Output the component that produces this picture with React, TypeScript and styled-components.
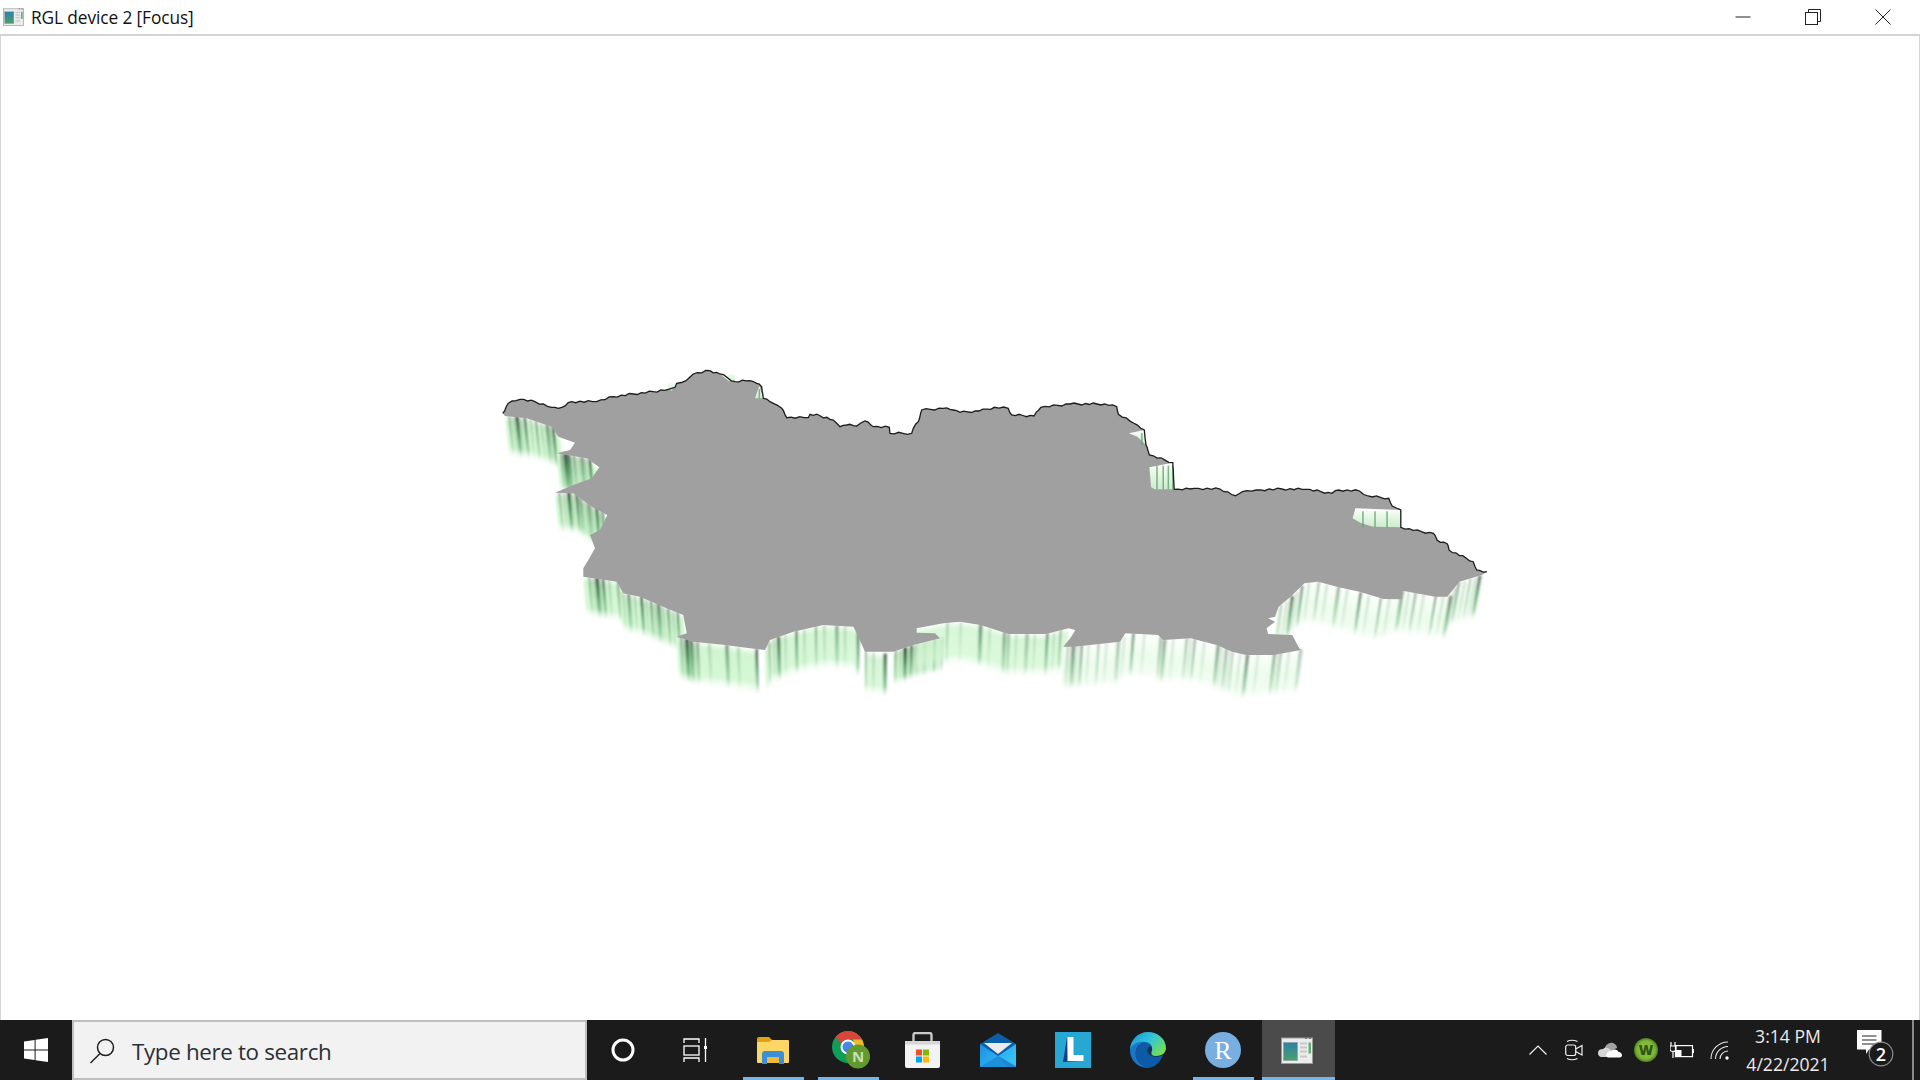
import React from "react";
import styled, { createGlobalStyle } from "styled-components";

const Global = createGlobalStyle`
  html, body { margin: 0; padding: 0; background: #fff; }
  #root { width: 1920px; height: 1080px; overflow: hidden; }
`;

const UI_FONT = `"Open Sans", "Noto Sans", "Liberation Sans", sans-serif`;

const Screen = styled.div`
  width: 1920px;
  height: 1080px;
  display: flex;
  flex-direction: column;
  overflow: hidden;
  font-family: ${UI_FONT};
`;
const TitleBar = styled.header`
  height: 34px;
  flex: none;
  display: flex;
  align-items: center;
  padding-left: 3px;
  background: #fff;
  border-bottom: 2px solid #d4d4d4;
`;
const TitleText = styled.span`
  margin-left: 7px;
  font-size: 17.3px;
  color: #111;
  white-space: nowrap;
  letter-spacing: -0.1px;
  flex: 1;
`;
const WinButton = styled.div`
  width: 70px;
  height: 34px;
  display: flex;
  align-items: center;
  justify-content: center;
`;
const WinButtons = styled.div`
  display: flex;
  margin-right: 2px;
`;
const Canvas = styled.main`
  flex: 1;
  min-height: 0;
  border-left: 1px solid #d4d4d4;
  border-right: 1px solid #d4d4d4;
  overflow: hidden;
  background: #fff;
`;
const MapSvg = styled.svg`
  display: block;
  width: 1920px;
  height: 984px;
  margin-left: -1px;
`;
const Taskbar = styled.footer`
  height: 60px;
  flex: none;
  display: flex;
  align-items: stretch;
  background: #1b1b1b;
`;
const StartButton = styled.div`
  width: 72px;
  display: flex;
  align-items: center;
  justify-content: center;
`;
const SearchBox = styled.div`
  width: 515px;
  box-sizing: border-box;
  display: flex;
  align-items: center;
  padding: 2px 0 0 15px;
  gap: 17px;
  background: #f2f2f2;
  border: 2px solid #bfbfbf;
`;
const SearchText = styled.span`
  font-size: 22.4px;
  color: #2b2f36;
  white-space: nowrap;
  letter-spacing: -0.35px;
`;
const TaskItem = styled.div<{ $open?: boolean; $active?: boolean }>`
  position: relative;
  box-sizing: border-box;
  padding-right: 4px;
  width: ${(p) => (p.$active ? "73px" : "75px")};
  display: flex;
  align-items: center;
  justify-content: center;
  background: ${(p) => (p.$active ? "#4b4b4b" : "transparent")};
  &::after {
    content: "";
    display: ${(p) => (p.$open || p.$active ? "block" : "none")};
    position: absolute;
    bottom: 0;
    height: 3px;
    left: ${(p) => (p.$active ? "0" : "6px")};
    right: ${(p) => (p.$active ? "0" : "8px")};
    background: #76b5e8;
  }
`;
const TaskViewSlot = styled(TaskItem)`
  padding-right: 8px;
`;
const Spacer = styled.div`
  flex: 1;
`;
const TrayIcon = styled.div`
  width: 36px;
  display: flex;
  align-items: center;
  justify-content: center;
`;
const WifiSlot = styled(TrayIcon)`
  padding-left: 3px;
  box-sizing: border-box;
`;
const Clock = styled.div`
  width: 104px;
  display: flex;
  flex-direction: column;
  align-items: center;
  justify-content: center;
  gap: 6px;
  color: #ececec;
  font-size: 17.6px;
  line-height: 22px;
`;
const NotifyButton = styled.div`
  width: 72px;
  display: flex;
  align-items: center;
  justify-content: center;
`;
const ShowDesktop = styled.div`
  width: 2px;
  margin-right: 6px;
  background: #8a8a8a;
`;

/* ---------- map data, in the crop coordinates it was measured from ---------- */
type Pt = [number, number];
const a = (x: number, y: number): Pt => [480 + x / 3, 350 + y / 3];
const b = (x: number, y: number): Pt => [960 + x * 0.3444, 380 + y / 3];
const ax = (x: number) => 480 + x / 3;
const bx = (x: number) => 960 + x * 0.3444;
const pa = (r: number[]) => {
  const o: Pt[] = [];
  for (let i = 0; i < r.length; i += 2) o.push(a(r[i], r[i + 1]));
  return o;
};
const pb = (r: number[]) => {
  const o: Pt[] = [];
  for (let i = 0; i < r.length; i += 2) o.push(b(r[i], r[i + 1]));
  return o;
};

const topEdge: Pt[] = [
  ...pa([68,190,85,160,120,148,165,155,215,172,245,172,275,155,350,155,400,140,460,132,520,125,565,118,585,112,590,100,618,92,640,72,690,62,720,72,765,95,810,92,830,100,845,110,850,145,880,160,905,175,920,203,985,203,990,193,1020,197,1060,210,1080,230,1100,225,1130,228,1155,213,1180,230,1228,232,1230,250,1295,250,1300,235,1315,215,1325,180,1390,175,1420,180]),
  ...pb([0,97,55,93,100,82,140,85,150,105,215,108,235,82,320,72,420,72,455,80,460,103,505,130,535,150,540,195,550,225,618,248,622,328,680,325,755,327,800,347,820,335,860,330,935,327,1005,328,1080,340,1100,330,1160,333,1185,348,1245,355,1255,378,1280,390,1280,442,1340,455,1375,460,1385,480,1415,492,1420,510,1490,545,1500,570,1530,575]),
];
const bottomEdge: Pt[] = [
  ...pb([1515,585,1450,605,1415,650,1380,650,1285,632,1283,658,1230,657,1160,635,1100,622,1040,605,1000,610,960,650,925,680,915,710,895,715,915,725,890,745,895,762,965,765,985,805,990,810,910,825,830,825,790,815,745,795,670,775,590,780,575,765,480,760,465,785,330,800,300,800,320,775,335,750,315,745,250,762,140,762,60,735,0,725]),
  ...pa([1390,820,1310,835,1310,848,1365,850,1380,865,1300,885,1240,905,1155,905,1130,850,1120,830,1030,825,940,845,870,870,855,900,735,885,640,875,590,860,620,850,610,795,560,775,480,740,430,730,410,695,310,680,310,655,325,630,345,595,330,555,360,540,382,495,335,470,280,430,225,428,280,405,335,385,358,352,320,325,230,310,270,300,285,278,235,260,215,230,140,205,75,198]),
];

type Wall = { edge: Pt[]; h: number; stripes: number[]; tint: number; dark: number };
const walls: Wall[] = [
  { edge: pa([75,198,140,205,215,230,240,265]), h: 43, stripes: [85,105,130,165,195,215].map(ax), tint: 1, dark: 0.85 },
  { edge: pa([230,310,320,325,350,350]), h: 42, stripes: [240,250,262,280,300,325].map(ax), tint: 1, dark: 0.85 },
  { edge: pa([225,428,280,430,335,470,375,490]), h: 42, stripes: [235,260,285,300,320,345,365].map(ax), tint: 1, dark: 0.85 },
  { edge: pa([310,680,410,695,430,730,480,740,560,775,610,795]), h: 42, stripes: [325,345,365,410,440,480,510,530,560,590].map(ax), tint: 1, dark: 0.85 },
  { edge: pa([590,860,640,875,735,885,825,900]), h: 46, stripes: [600,615,630,650,735,825].map(ax), tint: 1, dark: 0.85 },
  { edge: pa([855,900,870,870,940,845,1030,825,1120,830,1135,855]), h: 46, stripes: [865,890,945,1005,1065,1130].map(ax), tint: 0.85, dark: 0.7 },
  { edge: pa([1155,905,1220,915]), h: 44, stripes: [1155,1210].map(ax), tint: 0.7, dark: 0.7 },
  { edge: pa([1240,905,1300,885,1385,865]), h: 36, stripes: [1245,1270,1290,1310,1330,1360,1385].map(ax), tint: 0.85, dark: 0.9 },
  { edge: [...pa([1310,835,1390,820]), ...pb([0,725,60,735,140,762,250,762,315,745])], h: 45, stripes: [ax(1400), b(55,0)[0], b(125,0)[0], b(140,0)[0], b(190,0)[0], b(250,0)[0], b(290,0)[0]], tint: 0.6, dark: 0.55 },
  { edge: pb([300,800,465,785,480,760,575,765,590,780,670,775,745,795,790,815,830,825,990,810]), h: 46, stripes: [310,325,350,400,455,500,580,590,655,680,745,770,790,830,910,930,985].map(bx), tint: 0.3, dark: 0.55 },
  { edge: pb([915,725,925,680,960,650,1000,610,1040,605,1100,622,1230,657,1283,632,1420,650,1440,610,1520,585]), h: 45, stripes: [930,960,990,1040,1095,1160,1220,1280,1320,1380,1420,1445,1480,1505].map(bx), tint: 0.28, dark: 0.65 },
];

type Sliver = { pts: Pt[]; lines: number[] };
const slivers: Sliver[] = [
  { pts: pa([563,95,587,100,575,122,566,118]), lines: [] },
  { pts: pa([720,72,765,70,765,95,745,92]), lines: [] },
  { pts: pa([825,145,838,108,850,145]), lines: [ax(838)] },
  { pts: pb([490,160,535,150,540,195,515,170]), lines: [bx(528)] },
  { pts: pb([550,262,618,248,622,328,565,328,555,322]), lines: [bx(572), bx(590), bx(605), bx(618)] },
  { pts: pb([1148,385,1280,390,1280,442,1200,440,1165,430,1140,415]), lines: [bx(1170), bx(1205), bx(1240)] },
];

const yAt = (edge: Pt[], x: number) => {
  for (let i = 0; i < edge.length - 1; i++) {
    const [x1, y1] = edge[i];
    const [x2, y2] = edge[i + 1];
    if (x >= Math.min(x1, x2) && x <= Math.max(x1, x2)) {
      return x1 === x2 ? y1 : y1 + ((x - x1) / (x2 - x1)) * (y2 - y1);
    }
  }
  return edge[edge.length - 1][1];
};
const lean = (x: number) => (860 - x) * 0.013;
const pts = (l: Pt[]) => l.map((p) => `${p[0].toFixed(1)},${p[1].toFixed(1)}`).join(" ");

const jagged = (edge: Pt[]) => {
  const o: Pt[] = [];
  let n = 0;
  for (let i = 0; i < edge.length - 1; i++) {
    const [x1, y1] = edge[i];
    const [x2, y2] = edge[i + 1];
    const len = Math.hypot(x2 - x1, y2 - y1);
    const steps = Math.max(1, Math.round(len / 4));
    for (let s = 0; s < steps; s++) {
      n++;
      const t = s / steps;
      const j = s === 0 ? 0 : ((n * 37) % 5 - 2) * 0.5;
      o.push([x1 + (x2 - x1) * t, y1 + (y2 - y1) * t + j]);
    }
  }
  o.push(edge[edge.length - 1]);
  return o;
};

const StripeShape = ({ x, y, w, h, o }: { x: number; y: number; w: number; h: number; o: number }) => (
  <polygon
    fill="url(#stripe)"
    opacity={Math.min(o, 1)}
    points={pts([
      [x, y - 1],
      [x + w, y - 1],
      [x + w + lean(x), y + h - 1],
      [x + lean(x), y + h - 1],
    ])}
  />
);

const WallBody = ({ wall }: { wall: Wall }) => {
  const quads: React.ReactNode[] = [];
  const { edge, h } = wall;
  for (let i = 0; i < edge.length - 1; i++) {
    const [x1, y1] = edge[i];
    const [x2, y2] = edge[i + 1];
    const steps = Math.max(1, Math.round(Math.abs(x2 - x1) / 3));
    for (let s = 0; s < steps; s++) {
      const t0 = s / steps;
      const t1 = (s + 1) / steps + 0.1 / steps;
      const xa = x1 + (x2 - x1) * t0;
      const xb = x1 + (x2 - x1) * t1;
      const ya = y1 + (y2 - y1) * t0;
      const yb = y1 + (y2 - y1) * t1;
      quads.push(
        <polygon
          key={`${i}-${s}`}
          fill={wall.tint > 0.5 ? "url(#wallGreen)" : "url(#wallPale)"}
          opacity={wall.tint > 0.5 ? 0.55 + wall.tint * 0.45 : 1}
          points={pts([
            [xa, ya],
            [xb, yb],
            [xb + lean(xb), yb + h],
            [xa + lean(xa), ya + h],
          ])}
        />
      );
    }
  }
  /* soft green streaks between the measured dark lines */
  const soft = wall.stripes.slice(0, -1).flatMap((x, i) => {
    const next = wall.stripes[i + 1];
    const gap = next - x;
    const parts = gap > 14 ? [0.4] : [0.5];
    return parts.map((f, j) => {
      const sx = x + gap * f;
      return (
        <StripeShape
          key={`m${i}-${j}`}
          x={sx}
          y={yAt(edge, sx) + 1}
          w={2.6}
          h={h - 2}
          o={wall.dark * 0.24}
        />
      );
    });
  });
  const dark = wall.stripes.map((x, i) => (
    <StripeShape
      key={`s${i}`}
      x={x}
      y={yAt(edge, x)}
      w={1.8 + ((i * 5) % 3) * 0.9}
      h={h - 1}
      o={wall.dark * (0.56 + ((i * 7) % 4) * 0.14)}
    />
  ));
  return (
    <g>
      {quads}
      {soft}
      {dark}
    </g>
  );
};

const MapDrawing = () => {
  const topJag = jagged(topEdge);
  return (
    <MapSvg viewBox="0 36 1920 984" aria-hidden="true">
      <defs>
        <linearGradient id="wallGreen" x1="0" y1="0" x2="0" y2="1">
          <stop offset="0" stopColor="#f4fcf4" />
          <stop offset="0.14" stopColor="#cff5cf" />
          <stop offset="0.72" stopColor="#d6f8d6" />
          <stop offset="1" stopColor="#ffffff" stopOpacity="0" />
        </linearGradient>
        <linearGradient id="wallPale" x1="0" y1="0" x2="0" y2="1">
          <stop offset="0" stopColor="#fafffa" />
          <stop offset="0.5" stopColor="#ecfcec" />
          <stop offset="0.8" stopColor="#f2fdf2" />
          <stop offset="1" stopColor="#ffffff" stopOpacity="0" />
        </linearGradient>
        <linearGradient id="stripe" x1="0" y1="0" x2="0" y2="1">
          <stop offset="0" stopColor="#14301a" />
          <stop offset="0.4" stopColor="#2f7a44" />
          <stop offset="0.78" stopColor="#4f9f62" stopOpacity="0.7" />
          <stop offset="1" stopColor="#8ed09c" stopOpacity="0" />
        </linearGradient>
        <linearGradient id="sliverFill" x1="0" y1="0" x2="0" y2="1">
          <stop offset="0" stopColor="#ffffff" />
          <stop offset="0.4" stopColor="#e6f7e6" />
          <stop offset="1" stopColor="#cfeccf" />
        </linearGradient>
        <filter id="soft" x="-5%" y="-5%" width="110%" height="110%">
          <feGaussianBlur stdDeviation="0.9" />
        </filter>
        <filter id="edge" x="-5%" y="-5%" width="110%" height="110%">
          <feGaussianBlur stdDeviation="0.35" />
        </filter>
      </defs>
      <g filter="url(#soft)">
        {walls.map((w, i) => (
          <WallBody key={i} wall={w} />
        ))}
      </g>
      <polygon filter="url(#edge)" fill="#a0a0a0" points={pts([...topJag, ...bottomEdge])} />
      <g filter="url(#edge)">
        {slivers.map((s, i) => {
          const ys = s.pts.map((p) => p[1]);
          const y0 = Math.min(...ys);
          const y1 = Math.max(...ys);
          return (
            <g key={i}>
              <polygon points={pts(s.pts)} fill="url(#sliverFill)" />
              {s.lines.map((x, j) => (
                <line key={j} x1={x} x2={x} y1={y0 + 3} y2={y1} stroke="#5f9f6e" strokeWidth="1.6" opacity="0.75" />
              ))}
            </g>
          );
        })}
        <polyline points={pts(topJag)} fill="none" stroke="#1c1c1c" strokeWidth="1.3" />
      </g>
    </MapSvg>
  );
};

/* ---------- icons ---------- */
const RglIcon = ({ w, h }: { w: number; h: number }) => (
  <svg width={w} height={h} viewBox="0 0 32 26">
    <defs>
      <linearGradient id="rglPane" x1="0" y1="0" x2="0" y2="1">
        <stop offset="0" stopColor="#2f7fa8" />
        <stop offset="1" stopColor="#4ca06a" />
      </linearGradient>
    </defs>
    <rect x="0.5" y="0.5" width="31" height="25.5" fill="#ececec" stroke="#9a9a9a" />
    <rect x="2.5" y="5" width="14" height="18" fill="url(#rglPane)" stroke="#8aa0a0" strokeWidth="0.6" />
    <rect x="19" y="5" width="7" height="2" fill="#c8c8c8" />
    <rect x="19" y="9" width="7" height="2" fill="#c8c8c8" />
    <rect x="19" y="13" width="7" height="2" fill="#c8c8c8" />
    <rect x="19" y="18" width="7" height="2" fill="#c8c8c8" />
    <rect x="27.5" y="5" width="2.5" height="11" fill="#5fae74" />
    <rect x="24" y="0" width="2" height="1.5" fill="#777" />
    <rect x="28" y="0" width="2" height="1.5" fill="#777" />
  </svg>
);
const MinIcon = () => (
  <svg width="16" height="16" viewBox="0 0 16 16">
    <line x1="0.5" x2="15.5" y1="8" y2="8" stroke="#222" strokeWidth="1" />
  </svg>
);
const RestoreIcon = () => (
  <svg width="16" height="16" viewBox="0 0 16 16" fill="none" stroke="#222" strokeWidth="1">
    <rect x="0.5" y="3.5" width="12" height="12" />
    <path d="M3.5 3.5V0.5H15.5V12.5H12.5" />
  </svg>
);
const CloseIcon = () => (
  <svg width="16" height="16" viewBox="0 0 16 16" stroke="#222" strokeWidth="1">
    <path d="M0.5 0.5L15.5 15.5M15.5 0.5L0.5 15.5" />
  </svg>
);
const WindowsLogo = () => (
  <svg width="24" height="24" viewBox="0 0 24 24" fill="#fff">
    <path d="M0 3.4L10.6 2V11.5H0ZM11.6 1.8L24 0V11.5H11.6ZM0 12.5H10.6V22L0 20.6ZM11.6 12.5H24V24L11.6 22.2Z" />
  </svg>
);
const MagnifierIcon = () => (
  <svg width="26" height="26" viewBox="0 0 26 26" fill="none" stroke="#1e1e1e" strokeWidth="1.5">
    <circle cx="16.5" cy="9.5" r="8" />
    <path d="M11 15.5L1.5 25" />
  </svg>
);
const CortanaIcon = () => (
  <svg width="26" height="26" viewBox="0 0 26 26" fill="none" stroke="#fff" strokeWidth="3">
    <circle cx="13" cy="13" r="10" />
  </svg>
);
const TaskViewIcon = () => (
  <svg width="26" height="24" viewBox="0 0 26 24" fill="none" stroke="#fff" strokeWidth="1.3">
    <path d="M1 5V1H16V5" />
    <rect x="1" y="8" width="15" height="9" />
    <path d="M1 24V20H16V24" />
    <path d="M22.5 0V24" />
    <rect x="21" y="8" width="3" height="3" fill="#fff" stroke="none" />
  </svg>
);
const ExplorerIcon = () => (
  <svg width="32" height="27" viewBox="0 0 32 27">
    <path d="M0 2Q0 0 2 0H12L15 3V8H0Z" fill="#dfa312" />
    <path d="M0 6Q0 5 1 5L12 5L15 3H31Q32 3 32 4V25Q32 26 31 26H1Q0 26 0 25Z" fill="#fdd765" />
    <path d="M5 27V17Q5 14 8 14H24Q27 14 27 17V27H22V20H10V27Z" fill="#3b8fd6" />
    <rect x="10" y="20" width="12" height="6" fill="#f0b93a" />
  </svg>
);
const ChromeIcon = () => (
  <svg width="44" height="38" viewBox="-6 0 44 38">
    <circle cx="16" cy="16" r="16" fill="#0f9d58" />
    <path d="M16 0A16 16 0 0 1 30 8.5H16A7.5 7.5 0 0 0 9 12.5L3.5 6A16 16 0 0 1 16 0Z" fill="#d8453a" />
    <path d="M30 8.5A16 16 0 0 1 24 30L19 20Q24 14 21 8.5Z" fill="#f2bb2c" />
    <circle cx="16" cy="16" r="7.5" fill="#fff" />
    <circle cx="16" cy="16" r="5.5" fill="#4a86e8" />
    <circle cx="26" cy="25.5" r="12" fill="#639a30" />
    <text x="26" y="31" textAnchor="middle" fontFamily="Open Sans, sans-serif" fontWeight="700" fontSize="15" fill="#c9dfb0">N</text>
  </svg>
);
const StoreIcon = () => (
  <svg width="35" height="37" viewBox="0 0 35 37">
    <path d="M8.5 10V3Q8.5 1 10.5 1H24.5Q26.5 1 26.5 3V10" fill="none" stroke="#c9c9c9" strokeWidth="2.4" />
    <path d="M0 9H35V34Q35 36 33 36H2Q0 36 0 34Z" fill="#f3f3f3" />
    <rect x="0" y="9" width="35" height="3.5" fill="#d6d6d6" />
    <rect x="11" y="17.5" width="6" height="6" fill="#f25022" />
    <rect x="18" y="17.5" width="6" height="6" fill="#7fba00" />
    <rect x="11" y="24.5" width="6" height="6" fill="#00a4ef" />
    <rect x="18" y="24.5" width="6" height="6" fill="#ffb900" />
  </svg>
);
const MailIcon = () => (
  <svg width="36" height="34" viewBox="0 0 36 34">
    <defs>
      <linearGradient id="mailBody" x1="0" y1="0" x2="1" y2="0.6">
        <stop offset="0" stopColor="#1a8fe3" />
        <stop offset="1" stopColor="#36c3f7" />
      </linearGradient>
    </defs>
    <path d="M0 11L18 0L36 11V34H0Z" fill="#0b5ea8" />
    <path d="M4 10H32L18 21Z" fill="#ececec" />
    <path d="M0 11L18 23L36 11V34H0Z" fill="url(#mailBody)" />
    <path d="M18 23L36 34H0Z" fill="#1b8ad8" opacity="0.85" />
    <path d="M18 23L36 33V34H28Z" fill="#1a7fce" opacity="0.6" />
  </svg>
);
const LIcon = () => (
  <svg width="36" height="36" viewBox="0 0 36 36">
    <rect width="36" height="36" fill="#27a8d4" />
    <path d="M12 5L8 30L24 29L13 26Z" fill="#0e3f86" />
    <path d="M12.5 5H18.5V23H28.5V29H12.5Z" fill="#fff" />
  </svg>
);
const EdgeIcon = () => (
  <svg width="36" height="36" viewBox="0 0 36 36">
    <defs>
      <linearGradient id="edgeTop" x1="0" y1="0" x2="1" y2="0.6">
        <stop offset="0" stopColor="#1a8fd8" />
        <stop offset="0.55" stopColor="#30c5d8" />
        <stop offset="1" stopColor="#72dc5a" />
      </linearGradient>
    </defs>
    <path d="M18 0C28 0 36 7 36 16C36 21 32 24 26 24C22 24 20 23 20 21C22 19 22 14 17 13C10 11 1 15 0 18C0 8 8 0 18 0Z" fill="url(#edgeTop)" />
    <path d="M0 18C1 13 8 9 14 10C8 12 5 17 6 23C7 29 13 34 20 35.7C9 37 0 29 0 18Z" fill="#1976c9" />
    <path d="M14 10C19 10 23 13 22 18C19 21 21 24.5 26 24.5C29 24.5 31 23.8 33 23C30 31 24 36 18 36C10 34 5 28 5.5 21C6 15 10 11 14 10Z" fill="#0d5aa7" />
    <path d="M21 14C24 18 20 20 22 23C24 25.5 31 25 34 22.5C32 24.5 26 25.5 22 24C18 22.5 16.5 19 18 16Z" fill="#16324f" />
  </svg>
);
const RIcon = () => (
  <svg width="36" height="36" viewBox="0 0 36 36">
    <circle cx="18" cy="18" r="18" fill="#78aee0" />
    <text x="18" y="27" textAnchor="middle" fontFamily="Liberation Serif, serif" fontSize="26" fill="#fff">R</text>
  </svg>
);
const ChevronIcon = () => (
  <svg width="18" height="10" viewBox="0 0 18 10" fill="none" stroke="#f0f0f0" strokeWidth="1.2">
    <path d="M0.5 9.5L9 1L17.5 9.5" />
  </svg>
);
const MeetIcon = () => (
  <svg width="18" height="22" viewBox="0 0 18 22" fill="none" stroke="#f0f0f0" strokeWidth="1.2">
    <path d="M2 2.5Q7 0 12.5 2.5M2 19.5Q7 22 12.5 19.5" />
    <rect x="0.7" y="6" width="10" height="10.5" rx="2" />
    <path d="M10.7 10L17 6.5V16L10.7 12.5" />
  </svg>
);
const CloudIcon = () => (
  <svg width="24" height="16" viewBox="0 0 24 16">
    <path d="M6 8C7 3 11 0 15 1C18 2 19 4 19 6L8 11Z" fill="#a2a2a2" />
    <path d="M3 15Q0 14 0 11Q0 7 5 7Q7 5 10 6L16 10L12 15Z" fill="#d6d6d6" />
    <path d="M9 15C7 12 10 9 13 9C15 6.5 20 7 20.5 10C23 10 24 12 24 13.5Q24 15 22 15.5H10Z" fill="#fff" />
  </svg>
);
const WIcon = () => (
  <svg width="24" height="24" viewBox="0 0 24 24">
    <defs>
      <radialGradient id="wGrad">
        <stop offset="0" stopColor="#8cc63f" />
        <stop offset="0.75" stopColor="#7db536" />
        <stop offset="1" stopColor="#4f7d22" />
      </radialGradient>
    </defs>
    <circle cx="12" cy="12" r="12" fill="url(#wGrad)" />
    <text x="12" y="17" textAnchor="middle" fontFamily="Open Sans, sans-serif" fontWeight="800" fontSize="14" fill="#2f5512">W</text>
  </svg>
);
const BatteryIcon = () => (
  <svg width="24" height="17" viewBox="0 0 24 17" fill="none" stroke="#fff" strokeWidth="1.2">
    <rect x="5.5" y="3.6" width="17" height="11" />
    <rect x="23" y="7" width="1" height="4" fill="#fff" stroke="none" />
    <path d="M1 0V4M5 0V4M0 4H6V7Q6 9.5 3 9.5Q0 9.5 0 7ZM3 9.5V16" />
    <rect x="6" y="8" width="5.5" height="6.5" fill="#fff" stroke="none" />
  </svg>
);
const WifiIcon = () => (
  <svg width="20" height="20" viewBox="0 0 20 20" fill="none" stroke="#e8e8e8" strokeWidth="1.1">
    <path d="M1 19A17 17 0 0 1 18 2" />
    <path d="M5.5 19A12.5 12.5 0 0 1 18 6.5" />
    <path d="M10 19A8 8 0 0 1 18 11" />
    <circle cx="17" cy="18" r="1.7" fill="#fff" stroke="none" />
  </svg>
);
const NotifyIcon = () => (
  <svg width="38" height="40" viewBox="0 0 38 40">
    <path d="M0 0H24.5V19.5H12L9 24V19.5H0Z" fill="#fff" />
    <path d="M5 6H19.5M5 10H19.5M5 14H19.5" stroke="#222" strokeWidth="1.2" />
    <circle cx="24" cy="24" r="11.8" fill="#1b1b1b" stroke="#8f8f8f" strokeWidth="1.2" />
    <text x="24" y="30.5" textAnchor="middle" fontFamily="Open Sans, sans-serif" fontWeight="600" fontSize="18" fill="#fff">2</text>
  </svg>
);

export default function App() {
  return (
    <>
      <Global />
      <Screen>
        <TitleBar>
          <RglIcon w={21} h={18} />
          <TitleText>RGL device 2 [Focus]</TitleText>
          <WinButtons>
            <WinButton><MinIcon /></WinButton>
            <WinButton><RestoreIcon /></WinButton>
            <WinButton><CloseIcon /></WinButton>
          </WinButtons>
        </TitleBar>
        <Canvas>
          <MapDrawing />
        </Canvas>
        <Taskbar>
          <StartButton><WindowsLogo /></StartButton>
          <SearchBox>
            <MagnifierIcon />
            <SearchText>Type here to search</SearchText>
          </SearchBox>
          <TaskItem><CortanaIcon /></TaskItem>
          <TaskViewSlot><TaskViewIcon /></TaskViewSlot>
          <TaskItem $open><ExplorerIcon /></TaskItem>
          <TaskItem $open><ChromeIcon /></TaskItem>
          <TaskItem><StoreIcon /></TaskItem>
          <TaskItem><MailIcon /></TaskItem>
          <TaskItem><LIcon /></TaskItem>
          <TaskItem><EdgeIcon /></TaskItem>
          <TaskItem $open><RIcon /></TaskItem>
          <TaskItem $active><RglIcon w={32} h={27} /></TaskItem>
          <Spacer />
          <TrayIcon><ChevronIcon /></TrayIcon>
          <TrayIcon><MeetIcon /></TrayIcon>
          <TrayIcon><CloudIcon /></TrayIcon>
          <TrayIcon><WIcon /></TrayIcon>
          <TrayIcon><BatteryIcon /></TrayIcon>
          <WifiSlot><WifiIcon /></WifiSlot>
          <Clock>
            <span>3:14 PM</span>
            <span>4/22/2021</span>
          </Clock>
          <NotifyButton><NotifyIcon /></NotifyButton>
          <ShowDesktop />
        </Taskbar>
      </Screen>
    </>
  );
}
